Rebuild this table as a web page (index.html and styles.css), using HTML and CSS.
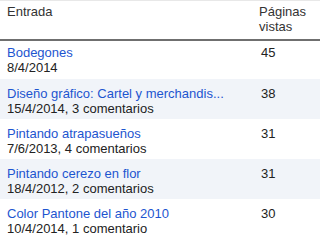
FILE: index.html
```html
<!DOCTYPE html>
<html lang="es">
<head>
<meta charset="utf-8">
<title>Entradas</title>
<link rel="stylesheet" href="styles.css">
</head>
<body>
<div class="stats">
  <div class="head">
    <div class="col-title">Entrada</div>
    <div class="col-views">Páginas<br>vistas</div>
  </div>
  <div class="row">
    <div class="col-title"><a class="link" href="#">Bodegones</a><div class="meta">8/4/2014</div></div>
    <div class="col-views">45</div>
  </div>
  <div class="row alt">
    <div class="col-title"><a class="link" href="#">Diseño gráfico: Cartel y merchandis...</a><div class="meta">15/4/2014, 3 comentarios</div></div>
    <div class="col-views">38</div>
  </div>
  <div class="row">
    <div class="col-title"><a class="link" href="#">Pintando atrapasueños</a><div class="meta">7/6/2013, 4 comentarios</div></div>
    <div class="col-views">31</div>
  </div>
  <div class="row alt">
    <div class="col-title"><a class="link" href="#">Pintando cerezo en flor</a><div class="meta">18/4/2012, 2 comentarios</div></div>
    <div class="col-views">31</div>
  </div>
  <div class="row">
    <div class="col-title"><a class="link" href="#">Color Pantone del año 2010</a><div class="meta">10/4/2014, 1 comentario</div></div>
    <div class="col-views">30</div>
  </div>
</div>
</body>
</html>
```
FILE: styles.css
```css
html, body {
  margin: 0;
  padding: 0;
  background: #ffffff;
}

.stats {
  width: 320px;
  font-family: "Liberation Sans", Arial, sans-serif;
  font-size: 13px;
  line-height: 15px;
  color: #222222;
}

.head {
  display: grid;
  grid-template-columns: 252px 1fr;
  box-sizing: border-box;
  height: 41px;
  border-top: 1px solid #e8e8e8;
  border-bottom: 2px solid #6f6f6f;
  padding-top: 3px;
  color: #333333;
}

.head .col-title {
  padding-left: 7px;
}

.head .col-views {
  padding-left: 7px;
}

.row {
  display: grid;
  grid-template-columns: 252px 1fr;
  box-sizing: border-box;
  height: 40px;
  padding-top: 7px;
}

.row .col-views {
  padding-left: 9px;
}

.row:nth-child(2) {
  height: 38px;
  padding-top: 4px;
}

.row.alt {
  background: #f1f4f9;
}

.row .col-title {
  padding-left: 7px;
  white-space: nowrap;
  overflow: hidden;
}

.link {
  color: #1d55d0;
  text-decoration: none;
}

.meta {
  color: #222222;
}
```
